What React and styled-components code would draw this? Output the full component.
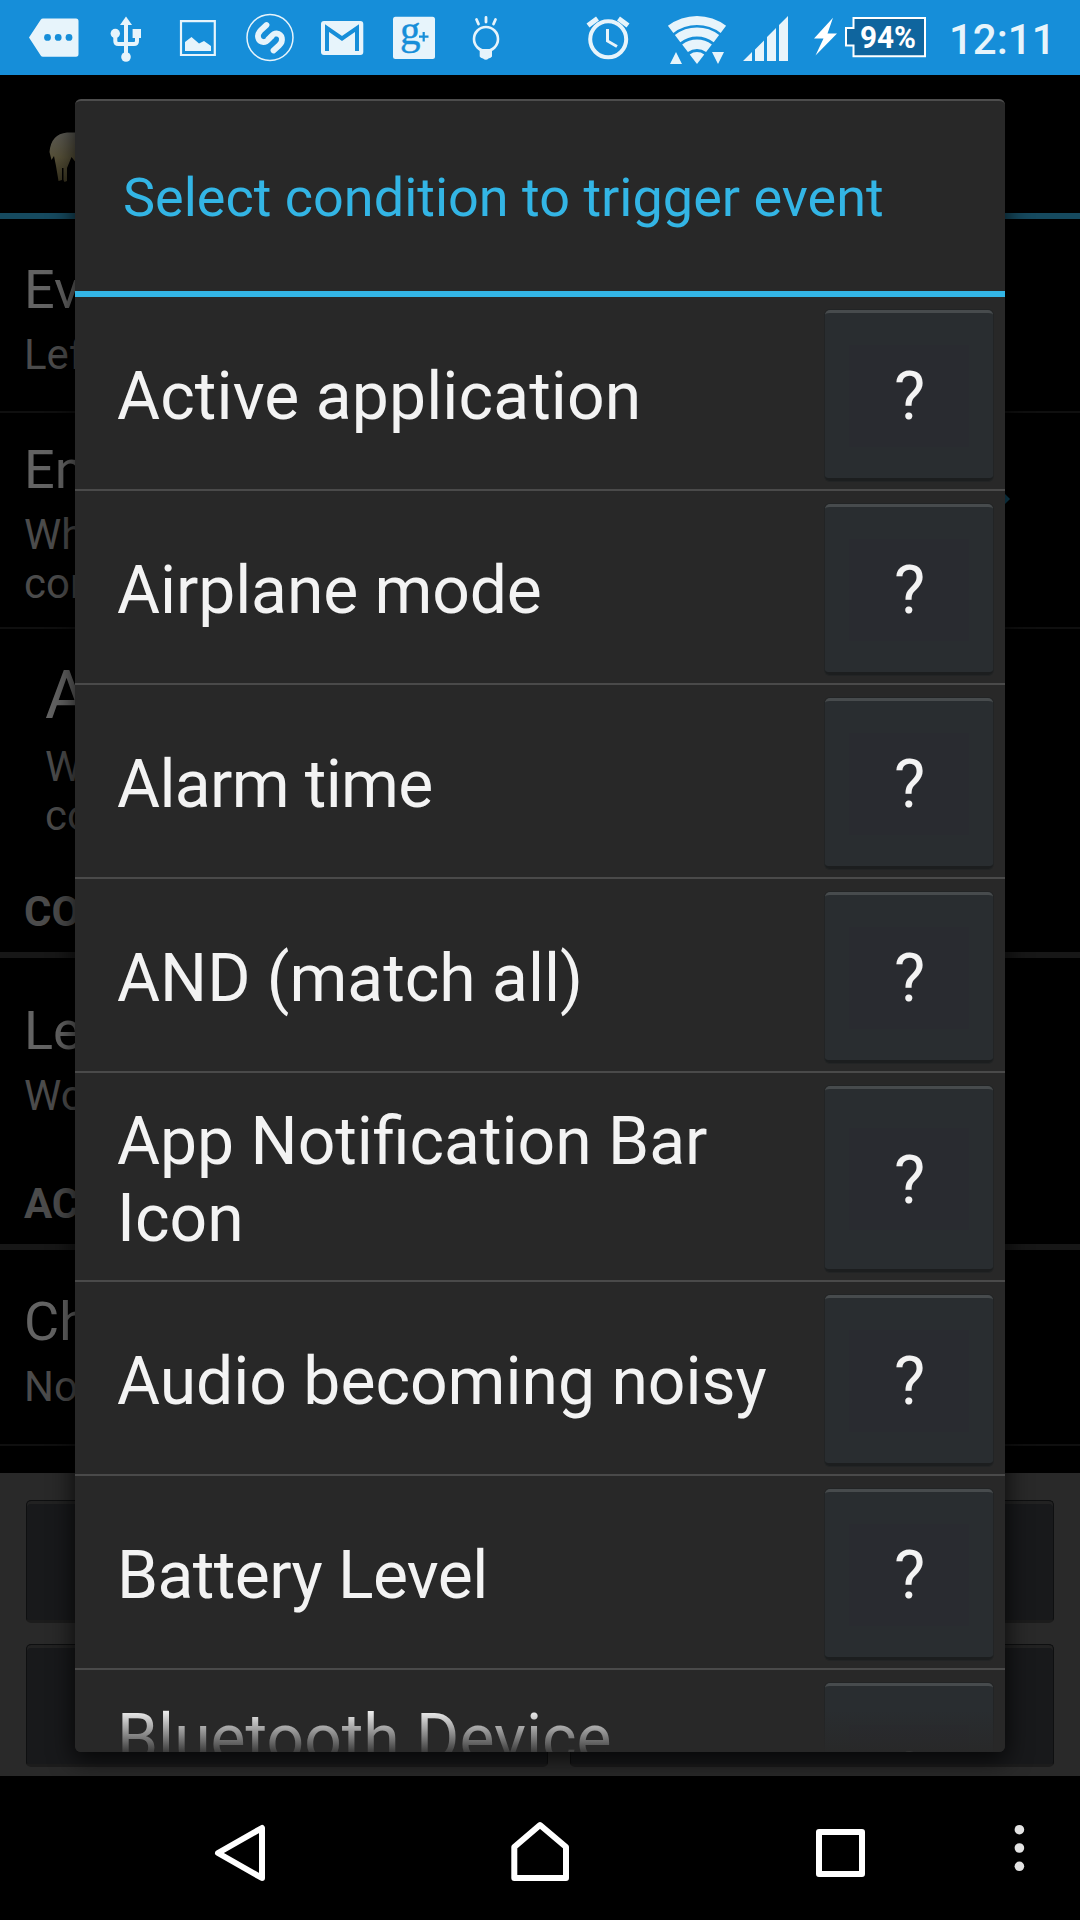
import React from "react";
import styled, { createGlobalStyle, css } from "styled-components";

const holoBlue = "#33b5e5";
const statusBlue = "#168ed9";
const statusIcon = "#e7f4fb";
const dialogGrey = "#282828";

const GlobalStyle = createGlobalStyle`
  body {
    margin: 0;
    background: #000;
    font-family: Roboto, sans-serif;
  }

  * {
    box-sizing: border-box;
  }
`;

const Phone = styled.div`
  position: relative;
  display: flex;
  flex-direction: column;
  width: 1080px;
  height: 1920px;
  overflow: hidden;
  background: #000;
`;

/* status bar */

const StatusBar = styled.header`
  display: flex;
  align-items: flex-start;
  flex: none;
  height: 75px;
  background: ${statusBlue};
  color: ${statusIcon};
`;

const StatusIcons = styled.svg`
  display: block;
  flex: none;
  width: 940px;
  height: 75px;
  fill: ${statusIcon};
`;

const Clock = styled.div`
  margin-left: 9px;
  font-size: 42px;
  font-weight: 500;
  line-height: 79px;
`;

/* screen behind the dialog */

const Screen = styled.main`
  display: flex;
  flex-direction: column;
  flex: none;
  height: 1701px;
`;

const ActionBar = styled.div`
  flex: none;
  height: 144px;
  padding: 56px 0 0 48px;
  border-bottom: 6px solid #164a5f;

  svg {
    display: block;
  }
`;

const Setting = styled.section`
  flex: none;
  height: ${({ height }) => height}px;
  padding: ${({ top }) => top}px 24px 0 ${({ inset }) => (inset ? 45 : 24)}px;
  white-space: pre;
  ${({ divider }) => divider && css`
    border-bottom: 2px solid #0f0f0f;
  `}
`;

const EnabledSetting = styled(Setting)`
  display: flex;
  justify-content: space-between;
`;

const SettingName = styled.div`
  font-size: ${({ large }) => (large ? 66 : 54)}px;
  line-height: ${({ large }) => (large ? 77 : 64)}px;
  color: #636363;
`;

const SettingSummary = styled.div`
  padding-top: 8px;
  font-size: 42px;
  line-height: 49px;
  color: #4b4b4b;
`;

const Category = styled.h2`
  flex: none;
  height: ${({ height }) => height}px;
  margin: 0;
  padding: ${({ top }) => top}px 24px 0;
  border-bottom: 6px solid #171717;
  font-size: 42px;
  font-weight: 700;
  line-height: 49px;
  color: #4b4b4b;
`;

const Arrow = styled.svg`
  flex: none;
  width: 14px;
  height: 28px;
  margin: 47px 46px 0 0;
`;

const ButtonPanel = styled.footer`
  display: grid;
  flex: 1;
  grid-template-columns: 522px 484px;
  grid-template-rows: 123px 123px;
  gap: 21px 22px;
  padding: 27px 26px 0;
  background: #292929;
`;

const PanelButton = styled.div`
  border: 1px solid #0e0f10;
  border-bottom: 3px solid #1c1c1c;
  border-radius: 5px;
  background: #18191b;
  box-shadow: inset 0 3px #222;
`;

/* dialog */

const Dialog = styled.div`
  position: absolute;
  top: 99px;
  left: 75px;
  display: flex;
  flex-direction: column;
  width: 930px;
  height: 1653px;
  overflow: hidden;
  border-top: 2px solid #4d4d4d;
  border-radius: 6px;
  background: ${dialogGrey};
`;

const DialogShadow = styled.div`
  position: absolute;
  top: 99px;
  left: 75px;
  width: 930px;
  height: 1653px;
  border-radius: 6px;
  box-shadow: 0 6px 24px 2px rgba(0, 0, 0, 0.75);
`;

const DialogTitle = styled.h1`
  flex: none;
  height: 196px;
  margin: 0;
  padding: 0 48px;
  border-bottom: 6px solid ${holoBlue};
  font-size: 54px;
  font-weight: 400;
  line-height: 194px;
  color: ${holoBlue};
`;

const ConditionList = styled.ul`
  flex: 1;
  margin: 0;
  padding: 0;
  overflow: hidden;
  list-style: none;
`;

const Condition = styled.li`
  display: flex;
  height: ${({ tall }) => (tall ? 209 : 194)}px;
  padding: 13px 12px 8px 42px;
  border-bottom: 2px solid #4a4a4a;
`;

const ConditionName = styled.span`
  flex: 1;
  align-self: center;
  padding: 2px 30px 0 0;
  font-size: 66px;
  line-height: 77px;
  letter-spacing: ${({ tracking }) => tracking || 0}px;
  color: #f3f3f3;
`;

const HelpButton = styled.button`
  flex: none;
  width: 168px;
  padding: 2px 0 0 1px;
  border: 0;
  border-top: 3px solid #474b4d;
  border-bottom: 3px solid #1c1e1f;
  border-radius: 5px;
  background: linear-gradient(#292b30, #292b30) center / 120px 102px no-repeat #292d30;
  box-shadow: 0 0 0 1px #222425;
  font-family: inherit;
  font-size: 66px;
  color: #f3f3f3;
`;

const ListFade = styled.div`
  position: absolute;
  right: 0;
  bottom: 0;
  left: 0;
  height: 42px;
  background: linear-gradient(rgba(40, 40, 40, 0), rgba(40, 40, 40, 0.9));
`;

/* navigation bar */

const NavBar = styled.nav`
  flex: none;
  height: 144px;
  background: #000;

  svg {
    display: block;
  }
`;

const conditions = [
    { name: "Active application", tracking: 0.1 },
    { name: "Airplane mode", tracking: -0.1 },
    { name: "Alarm time", tracking: -0.65 },
    { name: "AND (match all)" },
    { name: "App Notification Bar Icon", tall: true },
    { name: "Audio becoming noisy" },
    { name: "Battery Level", tracking: -0.6 },
    { name: "Bluetooth Device Connected", tall: true }
];

// One band of the wifi fan, apex at (697, 64)
function wifiBand(outer, inner) {
    const x = r => r * 0.606;
    const y = r => 64 - r * 0.795;
    return `M${697 - x(outer)} ${y(outer)}A${outer} ${outer} 0 0 1 ${697 + x(outer)} ${y(outer)}L${697 + x(inner)} ${y(inner)}A${inner} ${inner} 0 0 0 ${697 - x(inner)} ${y(inner)}Z`;
}

function StatusBarIcons() {
    return (
        <StatusIcons viewBox="0 0 940 75">
            {/* more notifications */}
            <path d="M43 18.5H76q2.5 0 2.5 2.5V54q0 2.7-2.5 2.7H43q-1.5 0-2.3-1.3L29 37.5 40.7 19.8q.8-1.3 2.3-1.3Z" />
            <g fill={statusBlue}>
                <circle cx="47.5" cy="37.4" r="3.4" />
                <circle cx="58.2" cy="37.4" r="3.4" />
                <circle cx="69" cy="37.4" r="3.4" />
            </g>
            {/* usb */}
            <path d="M126 16.5 132 25H120Z" />
            <circle cx="126" cy="57" r="4.8" />
            <circle cx="115.3" cy="33.5" r="4.7" />
            <path d="M132.6 29H141V38H132.6Z" />
            <path d="M126 24V57M115.3 34V41q0 3 3 3H134q3 0 3-3V36" fill="none" stroke={statusIcon} strokeWidth="4" />
            {/* picture */}
            <path d="M181 21.2H214.8V55H181Z" fill="none" stroke={statusIcon} strokeWidth="2.2" />
            <path d="M185 51V42L191.5 37 199 43.5 204 41 211 46V51Z" />
            {/* shazam */}
            <circle cx="270" cy="37.5" r="23" fill="none" stroke={statusIcon} strokeWidth="1.5" />
            <path
                d="M266.500 25 261 30C256 35 257.500 41.500 263.500 42.200 267.500 42.300 268.500 39 271.500 36.500M273.500 50.500 279 45.500C284 41 282.500 34 276.500 33.300 272.500 33.200 271.500 36.500 268.500 39"
                fill="none"
                stroke={statusIcon}
                strokeWidth="5.8"
                strokeLinecap="round"
            />
            {/* gmail */}
            <rect x="321" y="21" width="42.3" height="34" rx="3" />
            <path d="M327 51V28L342 38.5 357 28V51" fill="none" stroke={statusBlue} strokeWidth="4" />
            {/* google plus */}
            <rect x="393" y="16.7" width="42" height="42.3" rx="2.5" />
            <text x="400" y="43.5" fontFamily="Liberation Serif, serif" fontSize="41" fill={statusBlue} stroke={statusBlue} strokeWidth="0.4">g</text>
            <path d="M419 36.7H428.500M423.700 32V41.500" stroke={statusBlue} strokeWidth="2.2" />
            {/* bulb */}
            <circle cx="486" cy="39" r="12" fill="none" stroke={statusIcon} strokeWidth="2.6" />
            <path d="M479.700 49H492V56.500Q491 58 488.500 58.500 486 61 483 58.500 480.500 58 479.700 56.500Z" />
            <path d="M476.500 19.500 478.500 24M486 17.500V22M495.500 19.500 493.500 24" stroke={statusIcon} strokeWidth="2.8" strokeLinecap="round" />
            {/* alarm */}
            <circle cx="608.2" cy="39.3" r="18" fill="none" stroke={statusIcon} strokeWidth="4" />
            <path d="M607.500 29V41L617 46.500" fill="none" stroke={statusIcon} strokeWidth="3" />
            <path d="M588 25.500 597.500 18.500M618.500 18.500 628 25.500" stroke={statusIcon} strokeWidth="5" />
            {/* wifi */}
            <path d={wifiBand(48, 39)} />
            <path d={wifiBand(36.5, 27.5)} />
            <path d={wifiBand(24.5, 15)} />
            <path d={wifiBand(12, 0)} />
            <path d="M676 52 682 64H670ZM712 52H724L718 64Z" />
            {/* signal */}
            <path d="M743 61 752 52V61ZM755 61V49.500L764 40.500V61ZM767 61V37L776 28V61ZM779 61V25L788 16V61Z" />
            {/* battery */}
            <path d="M833 17.700 814 38.500H823.500L815.500 55.600 837 33.500H827.500Z" fill="#fff" />
            <path d="M853.500 18H925V56.300H853.500V45.500H846V28H853.500Z" fill="#0f659e" stroke="#fff" strokeWidth="2" />
            <text x="860" y="47.8" fontSize="31" fontWeight="700" fill="#fff" textLength="56" lengthAdjust="spacingAndGlyphs">94%</text>
        </StatusIcons>
    );
}

function Sheep() {
    return (
        <svg width="70" height="56" viewBox="48 131 70 56">
            <defs>
                <linearGradient id="wool" x1="0" y1="0" x2="0" y2="1">
                    <stop offset="0" stopColor="#5c5b55" />
                    <stop offset="0.5" stopColor="#575139" />
                    <stop offset="1" stopColor="#38331f" />
                </linearGradient>
            </defs>
            <path
                d="M49.500 152Q51 134 67 132.500H96V164L77 164 71.500 157 67 168V181L64.500 182 63.500 180V168H62V180L58.500 181 56 166 54 156 51.500 160Z"
                fill="url(#wool)"
            />
        </svg>
    );
}

function NavIcons() {
    return (
        <svg width="1080" height="144" viewBox="0 1776 1080 144" fill="none" stroke="#fff" strokeWidth="6" strokeLinejoin="round">
            <path d="M218 1853 262 1828V1878Z" />
            <path d="M514.300 1878V1847L540 1825 566 1847V1878Z" />
            <path d="M819 1832H862V1874H819Z" />
            <g fill="#e3e3e3" stroke="none">
                <circle cx="1019.4" cy="1829.7" r="4.8" />
                <circle cx="1019.4" cy="1848" r="4.8" />
                <circle cx="1019.4" cy="1866.3" r="4.8" />
            </g>
        </svg>
    );
}

export default function App() {
    return (
        <Phone>
            <GlobalStyle />
            <StatusBar>
                <StatusBarIcons />
                <Clock>12:11</Clock>
            </StatusBar>
            <Screen>
                <ActionBar>
                    <Sheep />
                </ActionBar>
                <Setting height={194} top={39} divider>
                    <SettingName>Event</SettingName>
                    <SettingSummary>Left</SettingSummary>
                </Setting>
                <EnabledSetting height={216} top={25} divider>
                    <div>
                        <SettingName>Enabled</SettingName>
                        <SettingSummary>{"Wh\ncon"}</SettingSummary>
                    </div>
                    <Arrow viewBox="0 0 14 28">
                        <path d="M0 0 14 14 0 28Z" fill="#10465c" />
                    </Arrow>
                </EnabledSetting>
                <Setting height={232} top={28} inset>
                    <SettingName large>A</SettingName>
                    <SettingSummary>{"Wh\ncon"}</SettingSummary>
                </Setting>
                <Category height={97} top={26}>CON</Category>
                <Setting height={176} top={41}>
                    <SettingName>Left</SettingName>
                    <SettingSummary>Work</SettingSummary>
                </Setting>
                <Category height={116} top={45}>ACT</Category>
                <Setting height={196} top={40} divider>
                    <SettingName>Cha</SettingName>
                    <SettingSummary>Non</SettingSummary>
                </Setting>
                <Setting height={27} top={0} />
                <ButtonPanel>
                    <PanelButton />
                    <PanelButton />
                    <PanelButton />
                    <PanelButton />
                </ButtonPanel>
            </Screen>
            <NavBar>
                <NavIcons />
            </NavBar>
            <DialogShadow />
            <Dialog>
                <DialogTitle>Select condition to trigger event</DialogTitle>
                <ConditionList>
                    {conditions.map(({ name, tall, tracking }) => (
                        <Condition key={name} tall={tall}>
                            <ConditionName tracking={tracking}>{name}</ConditionName>
                            <HelpButton>?</HelpButton>
                        </Condition>
                    ))}
                </ConditionList>
                <ListFade />
            </Dialog>
        </Phone>
    );
}
